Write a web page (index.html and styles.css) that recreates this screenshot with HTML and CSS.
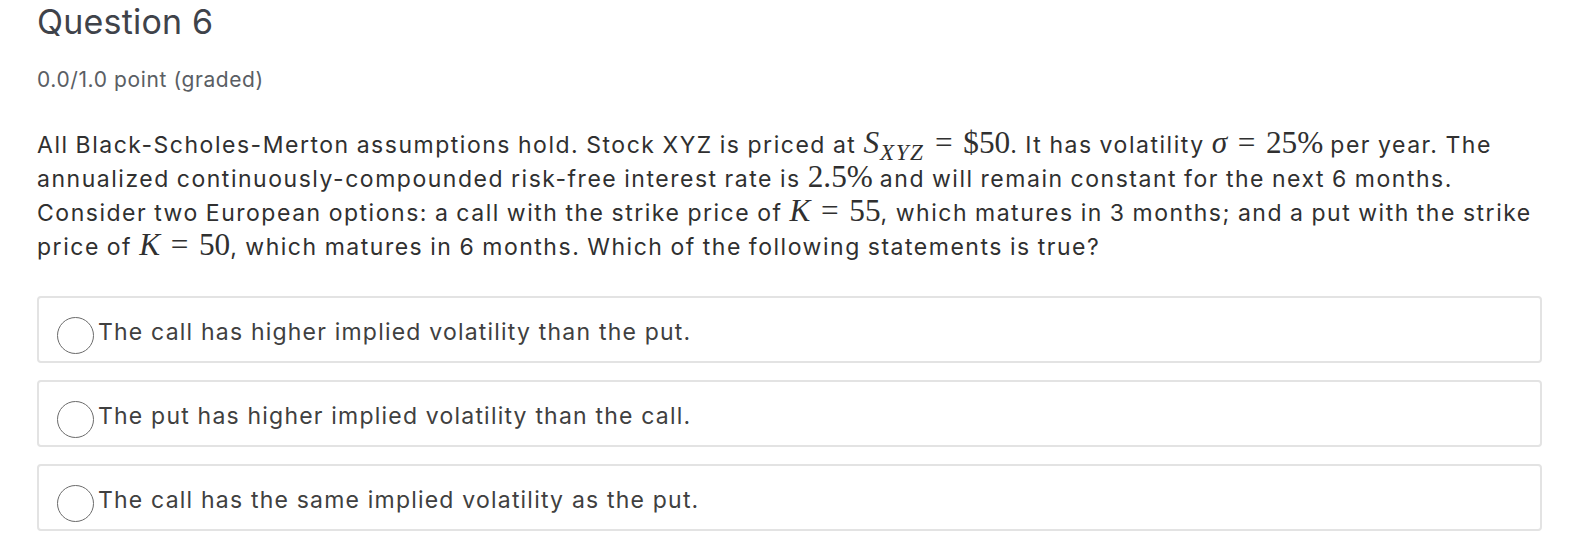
FILE: index.html
```html
<!DOCTYPE html>
<html lang="en">
<head>
<meta charset="utf-8">
<title>Question 6</title>
<link rel="stylesheet" href="styles.css">
</head>
<body>
<div class="page">
  <h2 class="title">Question 6</h2>
  <div class="score">0.0/1.0 point (graded)</div>
  <p class="prompt">All Black-Scholes-Merton assumptions hold. Stock XYZ is priced at <span class="m"><i>S</i><sub class="sub">XYZ</sub><span class="op">=</span>$50</span>. It has volatility <span class="m"><i>σ</i><span class="op">=</span>25%</span> per year. The annualized continuously-compounded risk-free interest rate is <span class="m">2.5%</span> and will remain constant for the next 6 months. Consider two European options: a call with the strike price of <span class="m"><i>K</i><span class="op">=</span>55</span>, which matures in 3 months; and a put with the strike price of <span class="m"><i>K</i><span class="op">=</span>50</span>, which matures in 6 months. Which of the following statements is true?</p>
  <div class="options">
    <label class="opt"><span class="radio"></span><span class="lbl">The call has higher implied volatility than the put.</span></label>
    <label class="opt"><span class="radio"></span><span class="lbl">The put has higher implied volatility than the call.</span></label>
    <label class="opt"><span class="radio"></span><span class="lbl">The call has the same implied volatility as the put.</span></label>
  </div>
</div>
</body>
</html>
```

FILE: styles.css
```css
html, body {
  margin: 0;
  padding: 0;
  background: #ffffff;
}
.page {
  padding: 0 30px 0 37px;
  font-family: Inter, "Noto Sans", sans-serif;
}
.title {
  margin: 0;
  padding-top: 2px;
  font-size: 34px;
  line-height: 40px;
  font-weight: 400;
  letter-spacing: 0.2px;
  color: #3f434a;
}
.score {
  margin-top: 23px;
  font-size: 21px;
  line-height: 30px;
  letter-spacing: 0.6px;
  color: #5a5e64;
}
.prompt {
  margin: 33px 0 0 0;
  font-size: 23px;
  line-height: 34px;
  letter-spacing: 1.52px;
  word-spacing: -1px;
  color: #303030;
}
.m {
  font-family: "Liberation Serif", "Times New Roman", serif;
  font-size: 1.36em;
  line-height: 0;
  letter-spacing: 0;
  word-spacing: 0;
  white-space: nowrap;
}
.m i {
  font-style: italic;
}
.sub {
  font-style: italic;
  font-size: 0.74em;
  vertical-align: -0.3em;
  line-height: 0;
  letter-spacing: 1.5px;
  margin-left: 1px;
}
.op {
  margin: 0 0.34em;
}
.options {
  margin-top: 32px;
  display: flex;
  flex-direction: column;
  gap: 17px;
}
.opt {
  display: flex;
  align-items: flex-start;
  border: 2px solid #e3e3e3;
  border-radius: 4px;
  padding: 19px 0 0 18px;
  box-sizing: border-box;
  height: 67px;
}
.radio {
  flex: none;
  width: 37px;
  height: 37px;
  box-sizing: border-box;
  border: 1.5px solid #6b6b6b;
  border-radius: 50%;
}
.lbl {
  margin-left: 4px;
  font-size: 23px;
  line-height: 30px;
  letter-spacing: 1.2px;
  color: #404040;
}
```
